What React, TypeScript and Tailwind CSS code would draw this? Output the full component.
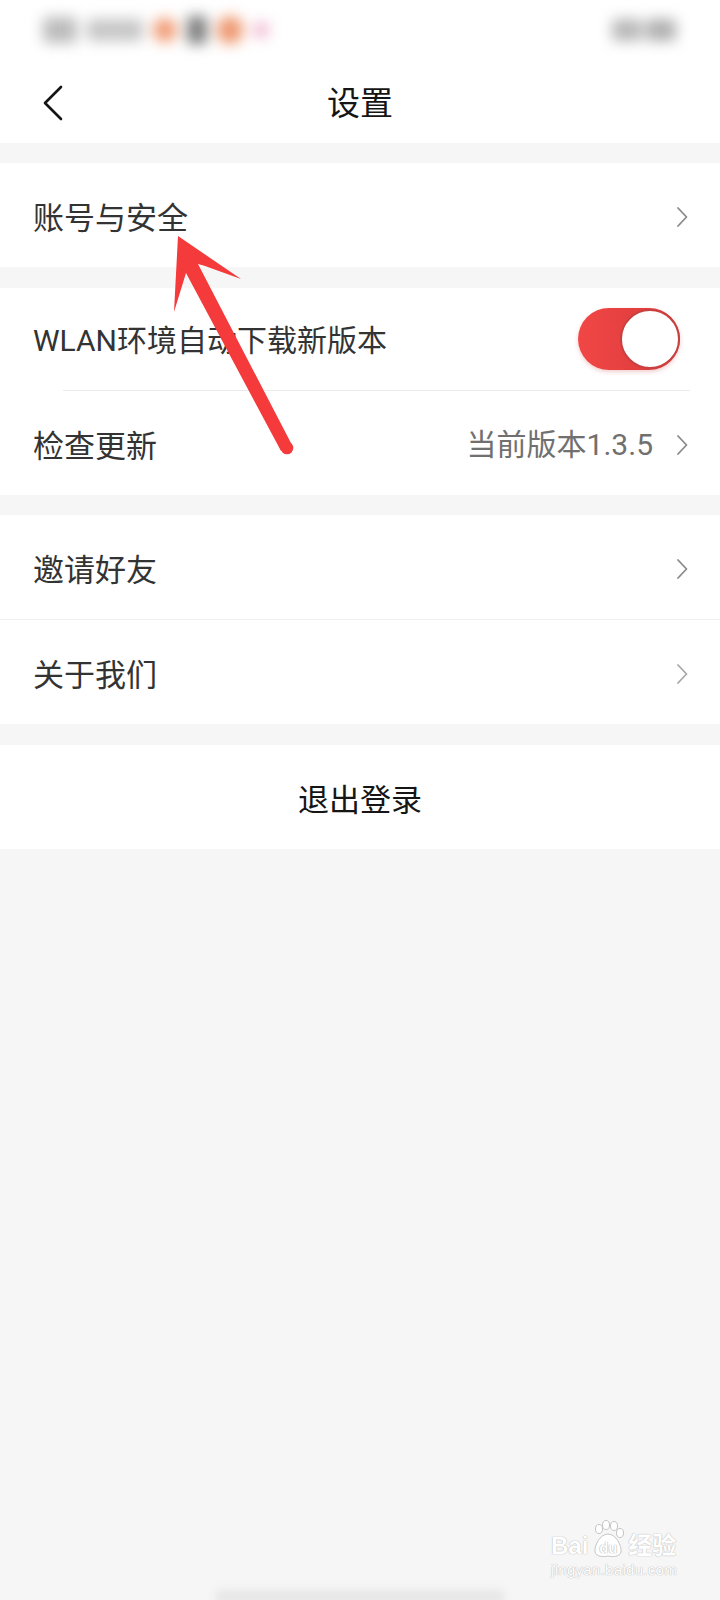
import React from "react";

const FONT = { fontFamily: 'Roboto, "Noto Sans CJK SC", "Noto Sans", sans-serif' };

function Chevron({ color = "#8a8a8a" }: { color?: string }) {
  return (
    <svg width="12" height="22" viewBox="0 0 12 22" className="shrink-0">
      <polyline points="2,2 10.5,11 2,20" fill="none" stroke={color} strokeWidth="1.8" strokeLinecap="round" strokeLinejoin="round" />
    </svg>
  );
}

function Row({ label, right, chevronColor, textColor = "text-[#333333]" }: { label: string; right?: React.ReactNode; chevronColor?: string; textColor?: string }) {
  return (
    <div className="flex h-[104px] items-center justify-between bg-white pl-[33px] pr-[32px]">
      <span className={`pt-[6px] text-[31px] leading-none ${textColor}`}>{label}</span>
      <div className="flex items-center gap-[23px] pt-[4px]">
        {right}
        <Chevron color={chevronColor} />
      </div>
    </div>
  );
}

function Toggle() {
  return (
    <div className="flex h-[62px] w-[102px] items-center justify-end rounded-full bg-gradient-to-r from-[#f24646] to-[#d83a3a] shadow-[0_2px_4px_rgba(200,60,60,0.25)]">
      <div className="h-[60px] w-[60px] rounded-full border-[2.5px] border-[#c84040] bg-white" />
    </div>
  );
}

export default function App() {
  return (
    <div className="relative h-[1600px] w-[720px] overflow-hidden bg-[#f6f6f6]" style={FONT}>
      {/* header */}
      <div className="bg-white">
        <div className="flex h-[60px] items-center justify-between pl-[43px] pr-[44px]">
          <div className="flex items-center gap-[10px] blur-[7px]">
            <div className="h-[26px] w-[34px] rounded bg-[#bcbcbc]" />
            <div className="h-[22px] w-[56px] rounded bg-[#c6c6c6]" />
            <div className="h-[24px] w-[24px] rounded-full bg-[#f09a74]" />
            <div className="h-[28px] w-[20px] rounded bg-[#7e7e7e]" />
            <div className="h-[28px] w-[26px] rounded-full bg-[#ee9870]" />
            <div className="h-[16px] w-[16px] rounded-full bg-[#f0b4cf]" />
          </div>
          <div className="flex items-center gap-[4px] blur-[7px]">
            <div className="h-[22px] w-[30px] rounded bg-[#b8b8b8]" />
            <div className="h-[22px] w-[30px] rounded bg-[#b0b0b0]" />
          </div>
        </div>
        <div className="grid h-[83px] grid-cols-[1fr_auto_1fr] items-center">
          <div className="pl-[42px] pt-[2px]">
            <svg width="22" height="36" viewBox="0 0 22 36">
              <polyline points="19,2 3,18 19,34" fill="none" stroke="#151515" strokeWidth="2.6" strokeLinecap="round" strokeLinejoin="round" />
            </svg>
          </div>
          <span className="pt-[4px] text-[33px] leading-none text-[#151515]">设置</span>
          <div />
        </div>
      </div>

      <div className="h-[20px]" />
      <Row label="账号与安全" />

      <div className="h-[21px]" />
      <div className="bg-white">
        <div className="flex h-[102px] items-center justify-between pl-[33px] pr-[40px]">
          <span className="pt-[4px] text-[30px] leading-none text-[#333333]">WLAN环境自动下载新版本</span>
          <Toggle />
        </div>
        <div className="pl-[63px] pr-[30px]">
          <div className="h-px bg-[#ebebeb]" />
        </div>
        <Row
          label="检查更新"
          right={<span className="text-[30px] leading-none text-[#707070]">当前版本1.3.5</span>}
        />
      </div>

      <div className="h-[20px]" />
      <div className="bg-white">
        <Row label="邀请好友" />
        <div className="h-px bg-[#efefef]" />
        <Row label="关于我们" chevronColor="#a8a8a8" />
      </div>

      <div className="h-[21px]" />
      <div className="flex h-[104px] items-center justify-center bg-white">
        <span className="pt-[6px] text-[31px] leading-none text-[#151515]">退出登录</span>
      </div>

      {/* red annotation arrow */}
      <svg className="pointer-events-none absolute left-0 top-0" width="720" height="1600" viewBox="0 0 720 1600">
        <g fill="#f43a3a">
          <polygon points="178,236 241,279 205,266 198,264 292,445 281,451 186,273 174,312" />
          <circle cx="287" cy="448" r="6.3" />
        </g>
      </svg>

      {/* watermark */}
      <div className="pointer-events-none absolute left-[551px] top-[1520px] flex flex-col items-start" style={{ fontFamily: '"Liberation Sans", "Noto Sans CJK SC", sans-serif' }}>
        <div className="flex items-end">
          <span className="text-[24px] font-bold leading-none text-white [text-shadow:0_0_1px_#b8b8b8,0_0_1px_#b8b8b8]">Bai</span>
          <div className="relative mx-[2px] flex h-[38px] w-[36px] items-end justify-center">
            <svg className="absolute left-0 top-0" width="36" height="38" viewBox="0 0 36 38">
              <g fill="white" stroke="#c4c4c4" strokeWidth="1">
                <ellipse cx="9" cy="9" rx="3.5" ry="4.5" />
                <ellipse cx="16" cy="5" rx="3.5" ry="4.5" />
                <ellipse cx="24" cy="6" rx="3.5" ry="4.5" />
                <ellipse cx="30" cy="13" rx="3.5" ry="4.5" />
                <path d="M18 14 C10 14 4 26 5 32 C6 37 14 37 18 36 C22 37 30 37 31 32 C32 26 26 14 18 14 Z" />
              </g>
            </svg>
            <span className="relative mb-[3px] text-[15px] font-bold leading-none text-white [text-shadow:0_0_1px_#a8a8a8,0_0_1px_#a8a8a8]">du</span>
          </div>
          <span className="text-[24px] font-bold leading-none text-white [text-shadow:0_0_1px_#b8b8b8,0_0_1px_#b8b8b8]">经验</span>
        </div>
        <span className="mt-[4px] text-[15px] leading-none tracking-[0.3px] text-white [text-shadow:0_0_1px_#b8b8b8,0_0_1px_#b8b8b8]">jingyan.baidu.com</span>
      </div>

      {/* bottom blurred bar */}
      <div className="pointer-events-none absolute left-[215px] top-[1590px] h-[14px] w-[290px] rounded-full bg-[#e6e6e6] blur-[4px]" />
    </div>
  );
}
